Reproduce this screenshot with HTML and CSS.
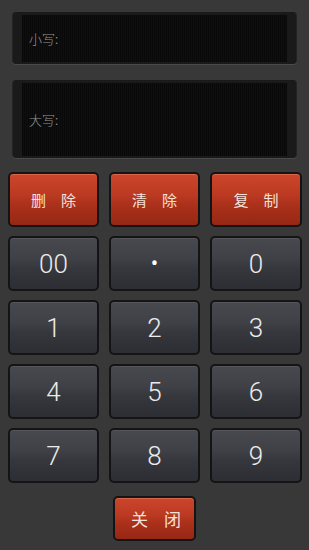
FILE: index.html
```html
<!DOCTYPE html>
<html lang="zh">
<head>
  <meta charset="UTF-8" />
  <meta name="viewport" content="width=device-width, initial-scale=1.0" />
  <title>金额大写</title>
  <link rel="stylesheet" href="styles.css">
</head>
<body>
  <div class="pantalla">
    <div class="pantalla-caja chica">
      <div class="pantalla-dentro"><span class="etiqueta">小写:</span></div>
    </div>
    <div class="pantalla-caja grande">
      <div class="pantalla-dentro"><span class="etiqueta">大写:</span></div>
    </div>
  </div>

  <div class="teclado">
    <button class="tecla roja">删除</button>
    <button class="tecla roja">清除</button>
    <button class="tecla roja">复制</button>
    <button class="tecla">00</button>
    <button class="tecla punto">•</button>
    <button class="tecla">0</button>
    <button class="tecla">1</button>
    <button class="tecla">2</button>
    <button class="tecla">3</button>
    <button class="tecla">4</button>
    <button class="tecla">5</button>
    <button class="tecla">6</button>
    <button class="tecla">7</button>
    <button class="tecla">8</button>
    <button class="tecla">9</button>
  </div>

  <div class="pie">
    <button class="tecla roja cerrar">关闭</button>
  </div>
</body>
</html>
```

FILE: styles.css
```css
* {
  box-sizing: border-box;
}

html, body {
  margin: 0;
  padding: 0;
  width: 100%;
  height: 100%;
  background-color: #383838;
  font-family: Roboto, "Noto Sans CJK SC", sans-serif;
}

.pantalla {
  padding: 12px 12px 0 12px;
}

.pantalla-caja {
  background-color: #1a1a1a;
  border-radius: 4px;
  padding: 3px 9px 2px 9px;
  border-left: 1px solid #242424;
  border-right: 1px solid #242424;
  box-shadow: 0 1px 0 #4a4a4a;
}

.chica {
  height: 52px;
  margin-bottom: 16px;
}

.grande {
  height: 78px;
}

.pantalla-dentro {
  height: 100%;
  display: flex;
  align-items: center;
  padding-left: 7px;
  background-color: #0b0b0b;
  background-image: repeating-linear-gradient(90deg, #090909 0, #090909 1px, #0f0f0f 1px, #0f0f0f 2px);
}

.etiqueta {
  font-family: "Noto Sans CJK SC", sans-serif;
  font-size: 13px;
  font-weight: 300;
  color: #9a9a9a;
}

.teclado {
  display: grid;
  grid-template-columns: 91px 91px 92px;
  grid-auto-rows: 55px;
  column-gap: 10px;
  row-gap: 9px;
  padding: 14px 8px 0 8px;
}

.tecla {
  margin: 0;
  padding: 0;
  border: 2px solid #141414;
  border-radius: 5px;
  background: linear-gradient(#48494f 0%, #404147 40%, #36373d 60%, #2d2e33 100%);
  box-shadow: inset 0 1px 0 #55575d;
  color: #ececec;
  font-family: Roboto, sans-serif;
  font-size: 26px;
  font-weight: 300;
  white-space: nowrap;
  cursor: pointer;
}

.punto {
  font-size: 22px;
  font-weight: 400;
  color: #fff;
}

.roja {
  background: linear-gradient(#cc452c 0%, #bc3a22 40%, #ab311b 60%, #962714 100%);
  box-shadow: inset 0 1px 0 #d9664b;
  color: #f5e2da;
  font-family: "Noto Sans CJK SC", sans-serif;
  font-size: 15px;
  font-weight: 400;
  letter-spacing: 15px;
  text-indent: 15px;
}

.pie {
  display: flex;
  justify-content: center;
  padding-top: 13px;
}

.cerrar {
  width: 83px;
  height: 45px;
  font-size: 17px;
  letter-spacing: 16px;
  text-indent: 16px;
}
```
